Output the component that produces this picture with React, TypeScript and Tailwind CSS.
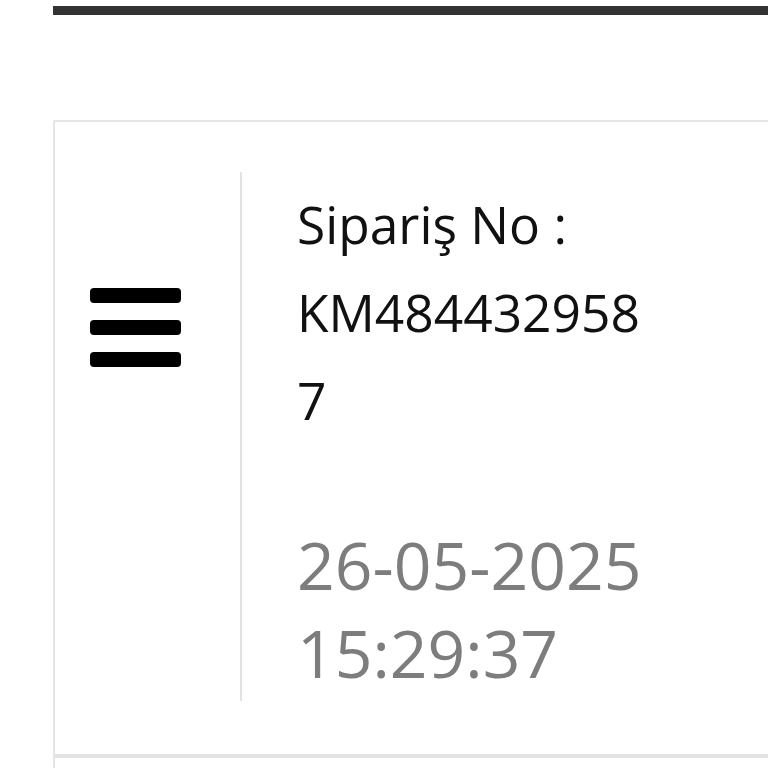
export default function App() {
  return (
    <div
      className="min-h-screen overflow-hidden bg-white pl-[53px] pt-[6px]"
      style={{ fontFamily: '"Open Sans", "Noto Sans", sans-serif' }}
    >
      <div className="h-[9px] bg-[#333333]" />

      <div className="mt-[105px] border-l-2 border-t-2 border-b-[4px] border-[#e6e6e6] border-b-[#e3e3e3] pb-[53px] pt-[50px]">
        <div className="flex">
          <div className="w-[185px] shrink-0 pl-[35px] pt-[116px]">
            <div className="flex flex-col gap-[17px]">
              <span className="block h-[15px] w-[91px] rounded-[4px] bg-black" />
              <span className="block h-[15px] w-[91px] rounded-[4px] bg-black" />
              <span className="block h-[15px] w-[91px] rounded-[4px] bg-black" />
            </div>
          </div>

          <div className="w-[412px] border-l-2 border-[#e2e2e2] pb-[5px] pl-[55px] pt-[8px]">
            <p className="break-words text-[51.5px] leading-[88px] text-[#111111]">
              Sipariş No : KM4844329587
            </p>
            <p className="mt-[76px] text-[66px] font-medium leading-[88px] text-[#7d7d7d]">
              26-05-2025
              <br />
              15:29:37
            </p>
          </div>
        </div>
      </div>

      <div className="h-[40px] border-l-2 border-[#e6e6e6]" />
    </div>
  );
}
